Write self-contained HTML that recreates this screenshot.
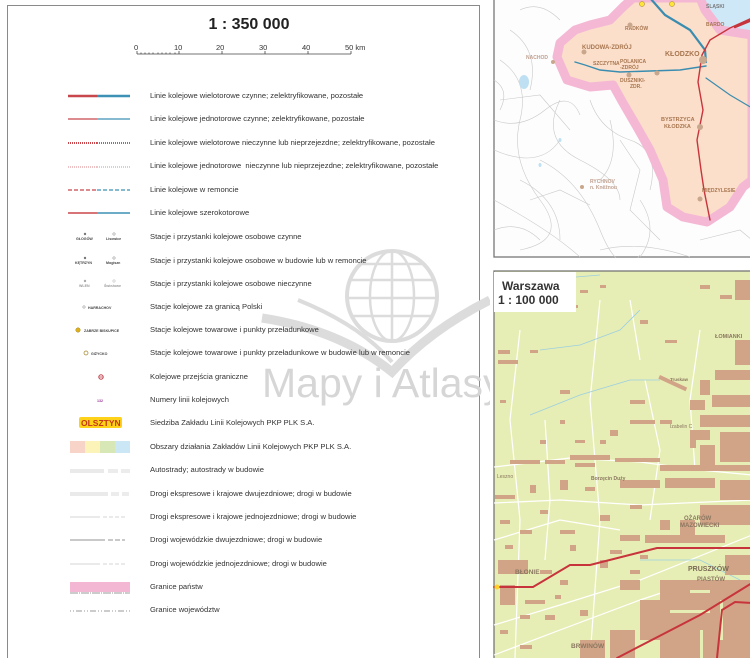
<!DOCTYPE html>
<html><head><meta charset="utf-8"><style>
*{margin:0;padding:0;box-sizing:border-box}
html,body{width:750px;height:658px;overflow:hidden}
body{background:#fff;font-family:"Liberation Sans",sans-serif;position:relative}
.box{position:absolute;left:7px;top:5px;width:473px;height:660px;border:1px solid #8a8a8a;background:#fff}
.t{position:absolute;left:150px;font-size:7.6px;color:#333;white-space:nowrap;line-height:10px}
</style></head><body>
<div class="box"></div>
<div style="position:absolute;left:0;width:498px;top:16px;text-align:center;font-weight:bold;font-size:16px;color:#222">1 : 350 000</div>
<svg style="position:absolute;left:0;top:0" width="490" height="658">
<g font-size="7.5" fill="#333" font-family="Liberation Sans">
<text x="134" y="50">0</text><text x="174" y="50">10</text><text x="216" y="50">20</text><text x="259" y="50">30</text><text x="302" y="50">40</text><text x="345" y="50">50 km</text></g>
<g stroke="#444" stroke-width="0.8"><line x1="137" y1="54" x2="351" y2="54"/>
<line x1="137" y1="51" x2="137" y2="54"/><line x1="141" y1="52.5" x2="141" y2="54"/><line x1="145" y1="52.5" x2="145" y2="54"/><line x1="149" y1="52.5" x2="149" y2="54"/><line x1="153" y1="52.5" x2="153" y2="54"/><line x1="158" y1="52.5" x2="158" y2="54"/><line x1="162" y1="52.5" x2="162" y2="54"/><line x1="166" y1="52.5" x2="166" y2="54"/><line x1="170" y1="52.5" x2="170" y2="54"/><line x1="175" y1="52.5" x2="175" y2="54"/>
<line x1="179" y1="51" x2="179" y2="54"/><line x1="222" y1="51" x2="222" y2="54"/><line x1="265" y1="51" x2="265" y2="54"/><line x1="308" y1="51" x2="308" y2="54"/><line x1="351" y1="51" x2="351" y2="54"/></g>
<!-- watermark -->
<g fill="none" stroke="#dcdcdc">
<circle cx="392" cy="296" r="45" stroke-width="4"/>
<ellipse cx="392" cy="296" rx="22" ry="45" stroke-width="2.5"/>
<line x1="392" y1="251" x2="392" y2="341" stroke-width="2.5"/>
<line x1="350" y1="280" x2="434" y2="280" stroke-width="2.5"/><line x1="347" y1="298" x2="437" y2="298" stroke-width="2.5"/><line x1="351" y1="316" x2="433" y2="316" stroke-width="2.5"/><line x1="361" y1="264" x2="423" y2="264" stroke-width="2.5"/>
<path d="M262 318 Q340 330 392 372 Q430 330 490 300" stroke-width="9"/>
<path d="M298 300 Q360 325 392 362" stroke-width="4"/>
</g>
<text x="262" y="397" font-size="41" fill="#d6d6d6" font-family="Liberation Sans">Mapy i Atlasy</text>
<!-- rail lines -->
<line x1="68" y1="96" x2="97" y2="96" stroke="#c8474c" stroke-width="2.6"/><line x1="97" y1="96" x2="130" y2="96" stroke="#3d91b4" stroke-width="2.6"/>
<line x1="68" y1="119" x2="97" y2="119" stroke="#c8474c" stroke-width="1.2"/><line x1="97" y1="119" x2="130" y2="119" stroke="#3d91b4" stroke-width="1.2"/>
<line x1="68" y1="143" x2="97" y2="143" stroke="#c8474c" stroke-width="2" stroke-dasharray="1 1"/><line x1="97" y1="143" x2="130" y2="143" stroke="#3d91b4" stroke-width="2" stroke-dasharray="1 1"/>
<line x1="68" y1="167" x2="97" y2="167" stroke="#d9848a" stroke-width="1" stroke-dasharray="1 1"/><line x1="97" y1="167" x2="130" y2="167" stroke="#7ab4cc" stroke-width="1" stroke-dasharray="1 1"/>
<line x1="68" y1="190" x2="97" y2="190" stroke="#c8474c" stroke-width="1.3" stroke-dasharray="4 2"/><line x1="97" y1="190" x2="130" y2="190" stroke="#3d91b4" stroke-width="1.3" stroke-dasharray="4 2"/>
<line x1="68" y1="213" x2="97" y2="213" stroke="#c8474c" stroke-width="1.6"/><line x1="97" y1="213" x2="130" y2="213" stroke="#3d91b4" stroke-width="1.6"/>
<g font-size="3.6" fill="#444" font-weight="bold">
<circle cx="85" cy="234" r="1.2" fill="#777"/><text x="76" y="240">GŁOGÓW</text><circle cx="114" cy="234" r="1.2" fill="none" stroke="#777" stroke-width=".5"/><text x="106" y="240">Lisowice</text>
<circle cx="85" cy="258" r="1.2" fill="#777"/><text x="75" y="264">KĘTRZYN</text><circle cx="114" cy="258" r="1.2" fill="none" stroke="#777" stroke-width=".5"/><text x="106" y="264">Mogiszn</text>
<circle cx="85" cy="281" r="1.2" fill="#aaa"/><text x="79" y="287" fill="#999">WLEN</text><circle cx="114" cy="281" r="1.2" fill="none" stroke="#aaa" stroke-width=".5"/><text x="104" y="287" fill="#999">Świeżowe</text>
<circle cx="84" cy="307" r="1.2" fill="none" stroke="#777" stroke-width=".5"/><text x="88" y="309">HARRACHOV</text>
<circle cx="78" cy="330" r="2.2" fill="#e0b21a" stroke="#a08020" stroke-width=".5"/><text x="84" y="332">ZABRZE BISKUPICE</text>
<circle cx="86" cy="353" r="2" fill="none" stroke="#a08020" stroke-width=".7"/><text x="91" y="355">GIŻYCKO</text>
<circle cx="101" cy="377" r="2.2" fill="none" stroke="#c0404a" stroke-width="1"/><line x1="99.5" y1="377" x2="102.5" y2="377" stroke="#c0404a" stroke-width=".8"/>
<text x="97" y="402" fill="#9a3c9a">132</text></g>
<rect x="79" y="417" width="43" height="11" rx="2" fill="#ffd21a"/><text x="81" y="426" font-size="8.5" font-weight="bold" fill="#c3381b">OLSZTYN</text>
<rect x="70" y="441" width="15" height="12" fill="#f7d3c8"/><rect x="85" y="441" width="15" height="12" fill="#fbf3b8"/><rect x="100" y="441" width="15" height="12" fill="#d7e8b6"/><rect x="115" y="441" width="15" height="12" fill="#cbe6f5"/>
<g stroke="#c9c9c9" stroke-width=".7"><line x1="70" y1="470" x2="104" y2="470"/><line x1="70" y1="472" x2="104" y2="472"/><line x1="108" y1="470" x2="118" y2="470"/><line x1="108" y1="472" x2="118" y2="472"/><line x1="121" y1="470" x2="130" y2="470"/><line x1="121" y1="472" x2="130" y2="472"/>
<line x1="70" y1="493" x2="108" y2="493"/><line x1="70" y1="495" x2="108" y2="495"/><line x1="111" y1="493" x2="119" y2="493"/><line x1="111" y1="495" x2="119" y2="495"/><line x1="122" y1="493" x2="129" y2="493"/><line x1="122" y1="495" x2="129" y2="495"/>
<line x1="70" y1="517" x2="130" y2="517" stroke-dasharray="30 3 4 2 4 2 4 2 4"/>
<line x1="70" y1="540" x2="130" y2="540" stroke-width="2" stroke-dasharray="35 3 5 2 5 2 3"/>
<line x1="70" y1="564" x2="130" y2="564" stroke-dasharray="30 3 4 2 4 2 4 2 4"/></g>
<rect x="70" y="582" width="60" height="10" fill="#f4b7d3"/><line x1="70" y1="593" x2="130" y2="593" stroke="#777" stroke-width=".7" stroke-dasharray="8 1 1 1"/>
<line x1="70" y1="611" x2="130" y2="611" stroke="#777" stroke-width=".7" stroke-dasharray="1 2 1 2 6 2"/>
</svg>
<div class="t" style="top:91px">Linie kolejowe wielotorowe czynne; zelektryfikowane, pozostałe</div>
<div class="t" style="top:114px">Linie kolejowe jednotorowe czynne; zelektryfikowane, pozostałe</div>
<div class="t" style="top:138px">Linie kolejowe wielotorowe nieczynne lub nieprzejezdne; zelektryfikowane, pozostałe</div>
<div class="t" style="top:161px">Linie kolejowe jednotorowe&nbsp; nieczynne lub nieprzejezdne; zelektryfikowane, pozostałe</div>
<div class="t" style="top:185px">Linie kolejowe w remoncie</div>
<div class="t" style="top:208px">Linie kolejowe szerokotorowe</div>
<div class="t" style="top:232px">Stacje i przystanki kolejowe osobowe czynne</div>
<div class="t" style="top:256px">Stacje i przystanki kolejowe osobowe w budowie lub w remoncie</div>
<div class="t" style="top:279px">Stacje i przystanki kolejowe osobowe nieczynne</div>
<div class="t" style="top:302px">Stacje kolejowe za granicą Polski</div>
<div class="t" style="top:325px">Stacje kolejowe towarowe i punkty przeładunkowe</div>
<div class="t" style="top:348px">Stacje kolejowe towarowe i punkty przeładunkowe w budowie lub w remoncie</div>
<div class="t" style="top:372px">Kolejowe przejścia graniczne</div>
<div class="t" style="top:395px">Numery linii kolejowych</div>
<div class="t" style="top:418px">Siedziba Zakładu Linii Kolejowych PKP PLK S.A.</div>
<div class="t" style="top:442px">Obszary działania Zakładów Linii Kolejowych PKP PLK S.A.</div>
<div class="t" style="top:465px">Autostrady; autostrady w budowie</div>
<div class="t" style="top:489px">Drogi ekspresowe i krajowe dwujezdniowe; drogi w budowie</div>
<div class="t" style="top:512px">Drogi ekspresowe i krajowe jednojezdniowe; drogi w budowie</div>
<div class="t" style="top:535px">Drogi wojewódzkie dwujezdniowe; drogi w budowie</div>
<div class="t" style="top:559px">Drogi wojewódzkie jednojezdniowe; drogi w budowie</div>
<div class="t" style="top:582px">Granice państw</div>
<div class="t" style="top:605px">Granice województw</div>

<!-- upper map -->
<svg style="position:absolute;left:493px;top:-2px" width="260" height="260" viewBox="493 -2 260 260">
<rect x="494" y="-2" width="260" height="259" fill="#fdfdfd" stroke="#777" stroke-width="1.3"/>
<g fill="none" stroke="#c9c9c9" stroke-width=".6">
<path d="M500 60 Q530 80 520 120 T540 200 T520 250"/><path d="M494 150 Q540 170 560 140"/><path d="M510 30 Q540 50 530 90"/><path d="M540 160 Q580 180 600 230 T640 255"/><path d="M494 200 Q550 230 580 257"/><path d="M560 100 Q540 140 580 160 T620 200"/><path d="M500 100 L540 95 L570 130"/><path d="M520 180 Q560 200 560 240"/><path d="M600 250 Q640 240 690 257"/>
<path d="M494 120 Q520 130 545 110 T580 115"/><path d="M590 100 Q600 130 630 140 T650 190"/><path d="M494 230 Q520 220 540 240"/><path d="M560 20 Q540 0 520 10"/><path d="M610 120 Q620 160 600 180"/><path d="M640 200 Q660 230 640 257"/><path d="M494 80 Q510 90 500 110"/><path d="M530 200 L560 190 L590 205"/><path d="M620 140 L640 170 L630 210 L660 240"/><path d="M700 240 L740 230 L752 240"/></g>
<ellipse cx="524" cy="82" rx="5" ry="7" fill="#bfe0f2"/><ellipse cx="560" cy="140" rx="1.5" ry="2" fill="#bfe0f2"/><ellipse cx="540" cy="165" rx="1.5" ry="2" fill="#bfe0f2"/>
<path d="M700 -2 L750 -2 L750 35 L720 30 L705 10Z" fill="#cfe8f7"/>
<path d="M633 -2 L623 7 L610 20 L590 25 L575 30 L560 43 L557 57 L567 80 L590 87 L613 85 L623 103 L637 127 L650 150 L663 180 L667 207 L683 217 L707 222 L730 207 L743 187 L752 180 L752 35 L720 30 L705 10 L700 -2Z" fill="#fbdfca" stroke="#f4b8d4" stroke-width="9" stroke-linejoin="round"/>
<g fill="none" stroke-linecap="round">
<path d="M650 -2 L665 15 L690 30 L705 50 L706 62" stroke="#3a8db0" stroke-width="2.2"/>
<path d="M706 66 L680 70 L650 71 L620 72 L600 70 L585 65 L575 62" stroke="#3a8db0" stroke-width="1.4"/>
<path d="M706 78 L730 95 L752 108" stroke="#3a8db0" stroke-width="1.2"/>
<path d="M752 18 L730 28 L710 40 L702 55 L698 82 L703 110 L697 140 L701 170 L704 190 L710 220" stroke="#c8343c" stroke-width="1.4"/>
<path d="M752 20 L735 27" stroke="#c8343c" stroke-width="2.4"/></g>
<g font-family="Liberation Sans" font-weight="bold">
<text x="582" y="49" font-size="6" fill="#a87650">KUDOWA-ZDRÓJ</text>
<text x="665" y="56" font-size="7" fill="#a87650">KŁODZKO</text>
<text x="620" y="63" font-size="5" fill="#a87650">POLANICA</text>
<text x="620" y="69" font-size="5" fill="#a87650">-ZDRÓJ</text>
<text x="593" y="65" font-size="5" fill="#a87650">SZCZYTNA</text>
<text x="620" y="82" font-size="5" fill="#a87650">DUSZNIKI-</text>
<text x="630" y="88" font-size="5" fill="#a87650">ZDR.</text>
<text x="661" y="121" font-size="5.5" fill="#a87650">BYSTRZYCA</text>
<text x="664" y="128" font-size="5.5" fill="#a87650">KŁODZKA</text>
<text x="625" y="30" font-size="5" fill="#a87650">RADKÓW</text>
<text x="706" y="26" font-size="5" fill="#a87650">BARDO</text>
<text x="706" y="8" font-size="5" fill="#777">ŚLĄSKI</text>
<text x="526" y="59" font-size="5" fill="#c0a090">NACHOD</text>
<text x="590" y="183" font-size="5" fill="#c0a090">RYCHNOV</text>
<text x="590" y="189" font-size="5" fill="#c0a090">n. Kněžnou</text>
<text x="702" y="192" font-size="5" fill="#a87650">MIĘDZYLESIE</text></g>
<g fill="#c9a78c"><circle cx="703" cy="60" r="4"/><circle cx="629" cy="75" r="2.5"/><circle cx="657" cy="73" r="2.5"/><circle cx="700" cy="127" r="3"/><circle cx="584" cy="52" r="2.5"/><circle cx="630" cy="25" r="2.5"/><circle cx="700" cy="199" r="2.5"/><circle cx="582" cy="187" r="2"/><circle cx="553" cy="62" r="2"/></g>
<circle cx="642" cy="4" r="2.5" fill="#ffe43a" stroke="#a08020" stroke-width=".5"/><circle cx="672" cy="4" r="2.5" fill="#ffe43a" stroke="#a08020" stroke-width=".5"/>
</svg>

<!-- lower map -->
<svg style="position:absolute;left:493px;top:270px" width="260" height="390" viewBox="493 270 260 390">
<rect x="494" y="271" width="260" height="390" fill="#e7eeb5" stroke="#777" stroke-width="1.3"/>
<g fill="none" stroke="#ffffff" stroke-width="1.2">
<path d="M494 467 L570 458 L640 462 L700 470 L752 475"/><path d="M494 503 L560 500 L640 505 L752 500"/>
<path d="M494 625 L560 605 L640 580 L690 560 L752 535"/><path d="M494 655 L560 630 L640 600 L700 580"/>
<path d="M520 330 L510 420 L520 520 L515 658"/><path d="M600 300 L590 400 L600 520 L590 658"/>
<path d="M645 380 L660 450 L650 520"/><path d="M494 540 L560 520 L620 530"/>
<path d="M700 330 L690 400 L695 470"/><path d="M545 420 L550 500 L545 560"/><path d="M630 300 L640 360"/></g>
<g fill="none" stroke="#9ccfe0" stroke-width=".8"><path d="M494 290 L540 280 L600 275"/><path d="M540 350 L580 345 L620 330 L640 310"/><path d="M640 560 L700 560 L740 580"/><path d="M530 415 L580 395 L630 380 L660 380"/></g>
<g fill="#d2a487">
<rect x="700" y="285" width="10" height="4"/><rect x="720" y="295" width="12" height="4"/><rect x="735" y="280" width="15" height="20"/><rect x="580" y="290" width="8" height="3"/><rect x="600" y="285" width="6" height="3"/>
<rect x="660" y="375" width="30" height="4" transform="rotate(25 660 375)"/><rect x="700" y="380" width="10" height="15"/><rect x="715" y="370" width="35" height="10"/><rect x="690" y="400" width="15" height="10"/><rect x="712" y="395" width="38" height="12"/>
<rect x="700" y="415" width="50" height="12"/><rect x="690" y="430" width="20" height="10"/><rect x="720" y="432" width="30" height="30"/><rect x="700" y="445" width="15" height="20"/>
<rect x="660" y="420" width="12" height="4"/><rect x="630" y="420" width="25" height="4"/><rect x="610" y="430" width="8" height="6"/>
<rect x="570" y="455" width="40" height="5"/><rect x="615" y="458" width="45" height="4"/><rect x="660" y="465" width="90" height="6"/><rect x="575" y="463" width="20" height="4"/>
<rect x="510" y="460" width="30" height="4"/><rect x="545" y="460" width="20" height="4"/><rect x="498" y="350" width="12" height="4"/><rect x="498" y="360" width="20" height="4"/>
<rect x="530" y="350" width="8" height="3"/><rect x="570" y="305" width="8" height="3"/><rect x="630" y="400" width="15" height="4"/><rect x="560" y="390" width="10" height="4"/>
<rect x="495" y="495" width="20" height="4"/><rect x="530" y="485" width="6" height="8"/><rect x="560" y="480" width="8" height="10"/><rect x="585" y="487" width="10" height="4"/>
<rect x="620" y="480" width="40" height="8"/><rect x="665" y="478" width="50" height="10"/><rect x="720" y="480" width="30" height="20"/><rect x="700" y="505" width="50" height="20"/>
<rect x="630" y="505" width="12" height="4"/><rect x="600" y="515" width="10" height="6"/><rect x="660" y="520" width="10" height="10"/><rect x="680" y="520" width="15" height="15"/>
<rect x="500" y="520" width="10" height="4"/><rect x="540" y="510" width="8" height="4"/><rect x="560" y="530" width="15" height="4"/><rect x="620" y="535" width="20" height="6"/>
<rect x="645" y="535" width="80" height="8"/><rect x="498" y="560" width="30" height="14"/><rect x="500" y="585" width="15" height="20"/><rect x="525" y="600" width="20" height="4"/>
<rect x="540" y="570" width="12" height="4"/><rect x="600" y="560" width="8" height="8"/><rect x="630" y="570" width="10" height="4"/><rect x="580" y="610" width="8" height="6"/>
<rect x="660" y="580" width="90" height="78"/><rect x="640" y="600" width="20" height="40"/><rect x="610" y="630" width="25" height="28"/><rect x="580" y="640" width="25" height="18"/>
<rect x="545" y="615" width="10" height="5"/><rect x="500" y="630" width="8" height="4"/><rect x="520" y="645" width="12" height="4"/><rect x="560" y="580" width="8" height="5"/>
<rect x="620" y="580" width="20" height="10"/><rect x="725" y="555" width="25" height="20"/>
<rect x="640" y="320" width="8" height="4"/><rect x="665" y="340" width="12" height="3"/><rect x="540" y="440" width="6" height="4"/><rect x="575" y="440" width="10" height="3"/><rect x="520" y="530" width="12" height="4"/><rect x="505" y="545" width="8" height="4"/><rect x="570" y="545" width="6" height="6"/><rect x="610" y="550" width="12" height="4"/><rect x="640" y="555" width="8" height="4"/><rect x="690" y="440" width="6" height="8"/><rect x="735" y="340" width="15" height="25"/><rect x="500" y="400" width="6" height="3"/><rect x="560" y="420" width="5" height="4"/><rect x="600" y="440" width="6" height="4"/><rect x="520" y="615" width="10" height="4"/><rect x="555" y="595" width="6" height="4"/></g>
<g fill="#e7eeb5"><rect x="690" y="590" width="20" height="3"/><rect x="670" y="610" width="40" height="3"/><rect x="700" y="630" width="3" height="28"/><rect x="720" y="600" width="3" height="40"/></g>
<g fill="none" stroke="#c8343c" stroke-width="2" stroke-linecap="round">
<path d="M494 587 L533 587 L570 565 L590 565 L657 548 L752 548"/>
<path d="M617 658 L700 615 L752 583"/>
<path d="M717 658 L722 610 L735 602 L752 603"/></g>
<circle cx="497" cy="587" r="2.5" fill="#ffd02a"/>
<rect x="494" y="272" width="82" height="40" fill="#fff"/>
<g font-family="Liberation Sans" font-weight="bold">
<text x="502" y="290" font-size="12" fill="#333">Warszawa</text>
<text x="498" y="304" font-size="12" fill="#333">1 : 100 000</text>
<text x="688" y="571" font-size="7" fill="#7a6a55">PRUSZKÓW</text>
<text x="515" y="574" font-size="6.5" fill="#8a7760">BŁONIE</text>
<text x="571" y="648" font-size="6.5" fill="#8a7760">BRWINÓW</text>
<text x="697" y="581" font-size="6" fill="#8a7760">PIASTÓW</text>
<text x="684" y="520" font-size="6" fill="#8a7760">OŻARÓW</text>
<text x="680" y="527" font-size="6" fill="#8a7760">MAZOWIECKI</text>
<text x="715" y="338" font-size="5.5" fill="#8a7760">ŁOMIANKI</text>
<text x="670" y="428" font-size="5" fill="#8a7760" font-weight="normal">Izabelin C</text>
<text x="670" y="381" font-size="4.5" fill="#8a7760">Truskaw</text>
<text x="497" y="478" font-size="5" fill="#8a7760" font-weight="normal">Leszno</text>
<text x="591" y="480" font-size="5" fill="#8a7760">Borzęcin Duży</text></g>
</svg>
</body></html>
